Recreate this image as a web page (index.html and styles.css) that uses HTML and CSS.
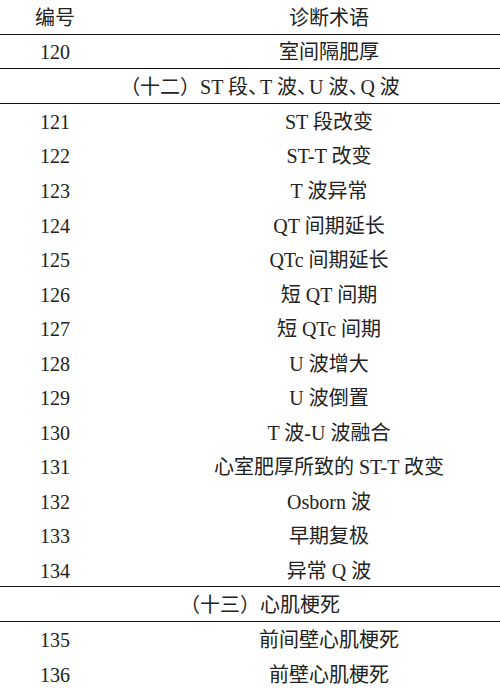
FILE: index.html
```html
<!DOCTYPE html>
<html lang="zh-CN">
<head>
<meta charset="utf-8">
<title>诊断术语</title>
<link rel="stylesheet" href="styles.css">
</head>
<body>
<div class="table">
  <div class="row head"><div class="num">编号</div><div class="term">诊断术语</div></div>
  <div class="row ruled"><div class="num">120</div><div class="term">室间隔肥厚</div></div>
  <div class="row section ruled"><div class="sec">（十二）ST 段<span class="dun">、</span>T 波<span class="dun">、</span>U 波<span class="dun">、</span>Q 波</div></div>
  <div class="row"><div class="num">121</div><div class="term">ST 段改变</div></div>
  <div class="row"><div class="num">122</div><div class="term">ST-T 改变</div></div>
  <div class="row"><div class="num">123</div><div class="term">T 波异常</div></div>
  <div class="row"><div class="num">124</div><div class="term">QT 间期延长</div></div>
  <div class="row"><div class="num">125</div><div class="term">QTc 间期延长</div></div>
  <div class="row"><div class="num">126</div><div class="term">短 QT 间期</div></div>
  <div class="row"><div class="num">127</div><div class="term">短 QTc 间期</div></div>
  <div class="row"><div class="num">128</div><div class="term">U 波增大</div></div>
  <div class="row"><div class="num">129</div><div class="term">U 波倒置</div></div>
  <div class="row"><div class="num">130</div><div class="term">T 波-U 波融合</div></div>
  <div class="row"><div class="num">131</div><div class="term">心室肥厚所致的 ST-T 改变</div></div>
  <div class="row"><div class="num">132</div><div class="term">Osborn 波</div></div>
  <div class="row"><div class="num">133</div><div class="term">早期复极</div></div>
  <div class="row ruled"><div class="num">134</div><div class="term">异常 Q 波</div></div>
  <div class="row section ruled"><div class="sec">（十三）心肌梗死</div></div>
  <div class="row"><div class="num">135</div><div class="term">前间壁心肌梗死</div></div>
  <div class="row"><div class="num">136</div><div class="term">前壁心肌梗死</div></div>
</div>
</body>
</html>
```
FILE: styles.css
```css
html, body {
  margin: 0;
  padding: 0;
  background: #fff;
}
.table {
  width: 500px;
  font-family: "Liberation Serif", "Noto Sans CJK SC", serif;
  font-size: 20px;
  font-weight: 400;
  color: #222;
}
.row {
  box-sizing: border-box;
  height: 34.55px;
  display: grid;
  grid-template-columns: 110px 1fr;
  align-items: center;
}
.row.head,
.row.ruled {
  border-bottom: 1.5px solid #111;
}
.num {
  text-align: center;
  line-height: 1;
  padding-top: 2px;
}
.term {
  text-align: center;
  padding-left: 48px;
  line-height: 1;
  padding-top: 2px;
}
.row.section {
  grid-template-columns: 1fr;
}
.sec {
  text-align: center;
  padding-left: 20px;
  line-height: 1;
  padding-top: 2px;
}
.dun {
  margin-right: -8px;
}
```
